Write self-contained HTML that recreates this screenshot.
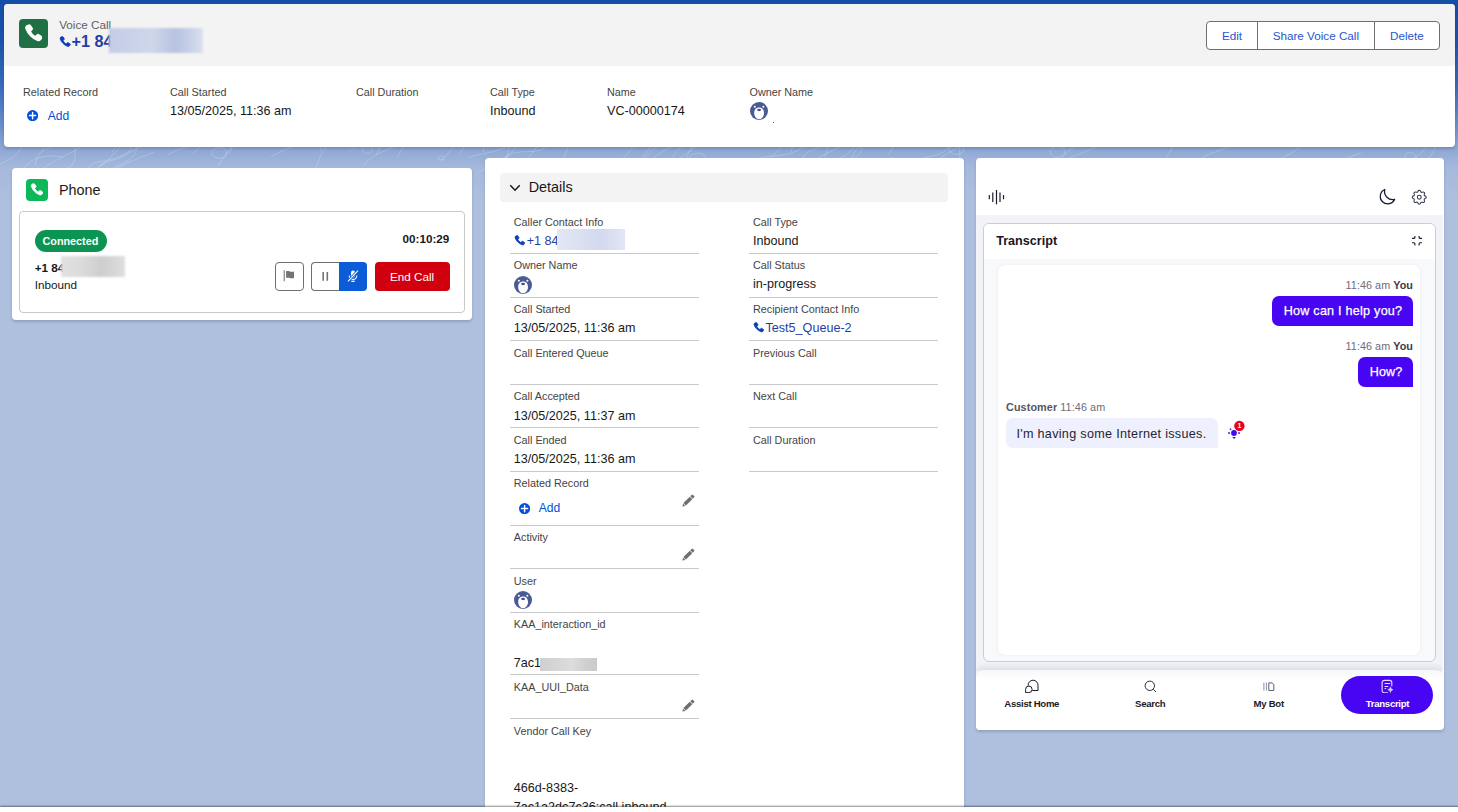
<!DOCTYPE html>
<html lang="en">
<head>
<meta charset="utf-8">
<title>Voice Call</title>
<style>
*{box-sizing:border-box;margin:0;padding:0}
html,body{width:1458px;height:812px;overflow:hidden}
body{position:relative;font-family:"Liberation Sans",Arial,sans-serif;color:#181818;background:#aec0de}
.a{position:absolute;white-space:nowrap}
.bgtop{left:0;top:0;width:1458px;height:210px;background:linear-gradient(180deg,#144ea6 0px,#1953ac 40px,#3367b9 80px,#5580c5 110px,#7093cc 130px,#8ba6d4 147px,#a6b9dc 168px,#aec0de 205px)}
.card{background:#fff;border-radius:4px;box-shadow:0 2px 3px rgba(0,0,0,.16)}
.btn{font-size:11.7px;line-height:27px;border:1px solid #6e6e6e;background:#fff;color:#2a55cf;text-align:center}
b{font-weight:bold}
</style>
</head>
<body>
<div class="a bgtop"></div>
<svg class="a" style="left:0;top:0" width="1458" height="180" viewBox="0 0 1458 180"><defs><linearGradient id="pf" x1="0" y1="0" x2="0" y2="1"><stop offset="0" stop-color="#fff" stop-opacity=".10"/><stop offset=".8" stop-color="#fff" stop-opacity=".22"/><stop offset="1" stop-color="#fff" stop-opacity="0"/></linearGradient></defs><path d="M459 155c16 -28 29 -17 23 -42 M35 165c5 -28 25 -1 27 -52 M909 183c14 -21 44 -28 67 -50 M193 154c10 -12 16 -10 55 -47 M791 152c5 -25 34 -15 37 -40 M651 160c18 -15 19 -10 49 -29 M1060 160c22 -27 25 -4 28 -43 M38 173c18 -17 41 -19 58 -39 M838 166c19 -9 27 -7 23 -35 M938 185c19 -24 24 -7 21 -44 M229 154c5 -13 15 -21 42 -30 M99 166c14 -11 39 0 35 -45 M511 181c21 -27 16 -22 33 -43 M852 159c4 -21 23 -10 72 -36 M743 172c16 -29 41 -3 68 -32 M561 164c6 -16 12 -28 31 -54 M483 152c4 -27 14 -17 21 -29 M889 155c9 -22 23 -26 67 -25 M670 167c6 -28 22 -21 66 -54 M14 183c14 -27 29 -29 49 -26 M1258 174c9 -22 16 -3 49 -33 M468 158c19 -8 40 -2 65 -34 M316 168c10 -29 11 -20 34 -36 M1396 166c21 -8 43 -17 32 -52 M271 157c15 -10 39 -13 56 -32 M105 173c20 -13 36 -13 30 -32 M472 178c21 -21 24 3 60 -54 M168 155c20 -12 15 -1 74 -37 M499 169c6 -30 44 -7 49 -27 M622 181c19 -25 19 -20 33 -39 M364 165c6 -10 22 -14 52 -28 M603 182c13 -18 28 -29 44 -54 M-14 178c7 -20 35 -11 38 -42 M802 177c6 -18 19 -20 62 -42 M811 177c20 -20 31 -12 48 -36 M649 169c13 -9 34 1 72 -51 M808 183c19 -27 14 -15 24 -52 M88 173c18 -10 15 -5 56 -55 M1287 184c8 -9 24 -13 74 -31 M219 165c13 -23 17 -19 60 -59 M800 165c4 -23 32 -12 24 -26 M1147 184c6 -24 11 -3 35 -55 M605 182c19 -24 15 2 51 -35 M112 152c16 -21 13 3 55 -32 M104 180c5 -11 26 -18 50 -28 M376 155c13 -25 14 -24 23 -53 M442 161c18 -24 28 -24 39 -59 M351 151c17 -18 17 -13 71 -56 M1192 165c13 -12 24 -12 58 -26 M487 179c17 -16 24 -18 23 -55 M85 176c9 -26 13 -1 68 -37 M397 158c9 -20 16 -14 34 -26 M1419 169c8 -9 21 -18 20 -47 M682 168c8 -19 10 -21 25 -46 M42 151c9 -25 30 -11 61 -37 M1040 181c11 -23 44 -25 60 -37 M45 179c20 -16 36 -2 28 -42 M726 179c18 -12 30 1 58 -36 M320 151c6 -22 14 -1 51 -38 M907 174c13 -30 38 -4 48 -41 M949 149a7 5 0 1 0 15 0a7 5 0 1 0 -15 0 M363 149a5 3 0 1 0 9 0a5 3 0 1 0 -9 0 M1050 152a7 5 0 1 0 15 0a7 5 0 1 0 -15 0 M1405 157a5 4 0 1 0 11 0a5 4 0 1 0 -11 0 M690 160a8 5 0 1 0 15 0a8 5 0 1 0 -15 0 M888 160a3 2 0 1 0 7 0a3 2 0 1 0 -7 0 M212 153a7 5 0 1 0 15 0a7 5 0 1 0 -15 0 M438 158a3 2 0 1 0 6 0a3 2 0 1 0 -6 0" fill="none" stroke="url(#pf)" stroke-width="1"/></svg>
<div class="a card" style="left:4px;top:4px;width:1450.5px;height:142.5px;overflow:hidden"><div class="a" style="left:0;top:0;width:100%;height:61.8px;background:#f3f3f3"></div></div>
<div class="a " style="left:19px;top:19px;width:29px;height:29px;border-radius:4px;background:#1f7145"></div>
<svg class="a" style="left:24.2px;top:24.3px" width="18.3" height="18.3" viewBox="1.2 1.200 21.8 21.8"><path fill="#fff" stroke="#fff" stroke-width="1.4" stroke-linejoin="round" d="M6.6 2.6c.6-.5 1.500-.4 2 .2l2.300 3.300c.4.600.3 1.400-.2 1.900L9.300 9.400c-.3.300-.4.800-.2 1.200.600 1.100 1.300 2.100 2.100 2.900.9.900 1.900 1.600 3 2.200.4.200.9.100 1.200-.2l1.400-1.400c.5-.5 1.300-.6 1.900-.2l3.300 2.300c.6.400.7 1.300.2 1.900l-1.300 1.600c-.9 1.100-2.400 1.500-3.700 1-3.200-1.200-6-3-8.300-5.400-2.400-2.300-4.200-5.100-5.400-8.300-.5-1.300-.1-2.800 1-3.700z"/></svg>
<div class="a " style="left:59.20px;top:17.15px;font-size:11.7px;line-height:15px;color:#5f5f5f;">Voice Call</div>
<svg class="a" style="left:59.2px;top:35.9px" width="11.6" height="11.6" viewBox="1.2 1.200 21.8 21.8"><path fill="#0d3fb8" stroke="#0d3fb8" stroke-width="1.6" stroke-linejoin="round" d="M6.6 2.6c.6-.5 1.500-.4 2 .2l2.300 3.300c.4.600.3 1.400-.2 1.900L9.300 9.400c-.3.300-.4.800-.2 1.200.600 1.100 1.300 2.100 2.100 2.900.9.900 1.900 1.600 3 2.200.4.200.9.100 1.200-.2l1.400-1.400c.5-.5 1.300-.6 1.900-.2l3.300 2.300c.6.400.7 1.300.2 1.900l-1.300 1.600c-.9 1.100-2.400 1.500-3.700 1-3.200-1.200-6-3-8.300-5.400-2.400-2.300-4.200-5.100-5.400-8.300-.5-1.300-.1-2.800 1-3.700z"/></svg>
<div class="a " style="left:71.60px;top:30.69px;font-size:16.2px;line-height:21px;color:#1f3fa6;font-weight:bold;">+1 84</div>
<div class="a " style="left:109px;top:28px;width:94px;height:25px;background:linear-gradient(90deg,#c3cde5,#c9d2e8 25%,#d0d7ea 45%,#b7c3e1 70%,#c6cfe7 85%,#dde1ee);filter:blur(1.2px)"></div>
<div class="a btn" style="left:1206px;top:21px;width:52px;height:29px;border-radius:4px 0 0 4px">Edit</div>
<div class="a btn" style="left:1257px;top:21px;width:117.7px;height:29px;border-radius:0">Share Voice Call</div>
<div class="a btn" style="left:1373.7px;top:21px;width:66.3px;height:29px;border-radius:0 4px 4px 0">Delete</div>
<div class="a " style="left:23.00px;top:85.46px;font-size:10.8px;line-height:14px;color:#444444;">Related Record</div>
<div class="a " style="left:170.00px;top:85.46px;font-size:10.8px;line-height:14px;color:#444444;">Call Started</div>
<div class="a " style="left:170.00px;top:102.63px;font-size:12.6px;line-height:16px;color:#181818;">13/05/2025, 11:36 am</div>
<div class="a " style="left:356.00px;top:85.46px;font-size:10.8px;line-height:14px;color:#444444;">Call Duration</div>
<div class="a " style="left:490.00px;top:85.46px;font-size:10.8px;line-height:14px;color:#444444;">Call Type</div>
<div class="a " style="left:490.00px;top:102.63px;font-size:12.6px;line-height:16px;color:#181818;">Inbound</div>
<div class="a " style="left:607.00px;top:85.46px;font-size:10.8px;line-height:14px;color:#444444;">Name</div>
<div class="a " style="left:607.00px;top:102.63px;font-size:12.6px;line-height:16px;color:#181818;">VC-00000174</div>
<div class="a " style="left:749.50px;top:85.46px;font-size:10.8px;line-height:14px;color:#444444;">Owner Name</div>
<svg class="a" style="left:27.1px;top:110.2px" width="11.2" height="11.2" viewBox="0 0 20 20"><circle cx="10" cy="10" r="10" fill="#0250d9"/><path d="M10 4.500v11M4.500 10h11" stroke="#fff" stroke-width="2.600" stroke-linecap="round"/></svg>
<div class="a " style="left:47.80px;top:107.51px;font-size:12.1px;line-height:16px;color:#0250d9;">Add</div>
<svg class="a" style="left:750px;top:102px" width="18" height="18" viewBox="0 0 36 36"><circle cx="18" cy="18" r="18" fill="#4a5b94"/><path d="M18.200 10.800c-5.800 0-9.800 4.200-9.800 11 0 6.200 3.800 12.500 9.800 12.500s9.800-6.300 9.800-12.500c0-6.800-4-11-9.800-11z" fill="#fff"/><ellipse cx="18.200" cy="16" rx="3.900" ry="2.300" fill="#3f4f86"/><circle cx="9.600" cy="9.400" r="2" fill="#fff"/><circle cx="26.800" cy="9.400" r="2" fill="#fff"/></svg>
<div class="a " style="left:773px;top:121.8px;width:1.3px;height:1.3px;background:#2b2b3a;border-radius:1px"></div>
<div class="a card" style="left:12px;top:168px;width:460px;height:152px;"></div>
<div class="a " style="left:26px;top:179px;width:22px;height:22px;border-radius:4px;background:#0db85a"></div>
<svg class="a" style="left:30px;top:183px" width="13.2" height="13.2" viewBox="1.2 1.200 21.8 21.8"><path fill="#fff" stroke="#fff" stroke-width="1.5" stroke-linejoin="round" d="M6.6 2.6c.6-.5 1.500-.4 2 .2l2.300 3.300c.4.600.3 1.400-.2 1.900L9.300 9.400c-.3.300-.4.800-.2 1.200.600 1.100 1.300 2.100 2.100 2.900.9.900 1.900 1.600 3 2.200.4.200.9.100 1.200-.2l1.400-1.400c.5-.5 1.300-.6 1.900-.2l3.300 2.300c.6.400.7 1.300.2 1.900l-1.300 1.600c-.9 1.100-2.400 1.500-3.700 1-3.200-1.200-6-3-8.300-5.400-2.400-2.300-4.200-5.100-5.400-8.300-.5-1.300-.1-2.800 1-3.700z"/></svg>
<div class="a " style="left:59.00px;top:180.51px;font-size:14.4px;line-height:19px;color:#181818;">Phone</div>
<div class="a " style="left:19px;top:211px;width:446px;height:102px;border:1px solid #c9c9c9;border-radius:4px"></div>
<div class="a " style="left:34.7px;top:230px;width:72px;height:21.7px;border-radius:11px;background:#0c9552"></div>
<div class="a " style="left:42.50px;top:233.86px;font-size:10.8px;line-height:14px;color:#fff;font-weight:bold;">Connected</div>
<div class="a " style="right:1008.70px;top:231.15px;font-size:11.7px;line-height:15px;color:#181818;font-weight:bold;">00:10:29</div>
<div class="a " style="left:34.70px;top:260.45px;font-size:11.7px;line-height:15px;color:#181818;font-weight:bold;">+1 84</div>
<div class="a " style="left:61px;top:256px;width:64px;height:20.7px;background:linear-gradient(90deg,#e1e1e1,#dadada 35%,#cecece 62%,#d6d6d6 82%,#e0e0e0);filter:blur(.8px)"></div>
<div class="a " style="left:34.70px;top:277.15px;font-size:11.7px;line-height:15px;color:#181818;">Inbound</div>
<div class="a " style="left:275px;top:262px;width:29px;height:29px;border:1px solid #6e6e6e;border-radius:4px;background:#fff"></div>
<div class="a " style="left:311px;top:262px;width:28.5px;height:29px;border:1px solid #6e6e6e;border-right:0;border-radius:4px 0 0 4px;background:#fff"></div>
<div class="a " style="left:339px;top:262px;width:28px;height:29px;border-radius:0 4px 4px 0;background:#0b5cd6"></div>
<div class="a " style="left:375px;top:262px;width:75px;height:29px;border-radius:4px;background:#d1000f"></div>
<div class="a " style="left:390.00px;top:268.95px;font-size:11.7px;line-height:15px;color:#fff;">End Call</div>
<svg class="a" style="left:282px;top:269px" width="14" height="14" viewBox="0 0 14 14"><path d="M2.200 1.200v11.100" stroke="#747474" stroke-width="1.100"/><path d="M4.100 2.300c1.300-.5 2.500-.4 3.700.1 1.300.5 2.600.6 4.200.1v6.600c-1.500.6-2.900.5-4.200 0-1.200-.5-2.400-.6-3.700-.1z" fill="#747474"/></svg>
<svg class="a" style="left:320px;top:270px" width="10" height="12" viewBox="0 0 10 12"><path d="M3.200 2v8.800M7.300 2v8.800" stroke="#747474" stroke-width="1.600"/></svg>
<svg class="a" style="left:346px;top:269px" width="14" height="14" viewBox="0 0 14 14"><rect x="5" y="1.600" width="4" height="7" rx="2" fill="#fff"/><path d="M3.200 6.500c0 2.200 1.700 3.900 3.800 3.900s3.800-1.700 3.800-3.900" fill="none" stroke="#fff" stroke-width="1.100"/><path d="M5.300 12.300h3.400" stroke="#fff" stroke-width="1.300"/><path d="M2 12.300L12 1.700" stroke="#0b5cd6" stroke-width="2.600"/><path d="M2 12.300L12 1.700" stroke="#fff" stroke-width="1.100"/></svg>
<div class="a card" style="left:485px;top:158px;width:478.5px;height:660px;border-radius:4px 4px 0 0"></div>
<div class="a " style="left:500px;top:173px;width:448px;height:28.8px;background:#f3f3f3;border-radius:4px"></div>
<svg class="a" style="left:509px;top:182px" width="12" height="12" viewBox="0 0 12 12"><path d="M1.300 3.200L6 8.200l4.700-5" fill="none" stroke="#181818" stroke-width="1.500"/></svg>
<div class="a " style="left:528.70px;top:177.51px;font-size:14.4px;line-height:19px;color:#181818;">Details</div>
<div class="a " style="left:513.80px;top:215.26px;font-size:10.8px;line-height:14px;color:#444444;">Caller Contact Info</div>
<svg class="a" style="left:514.4px;top:235.2px" width="11" height="11" viewBox="1.2 1.200 21.8 21.8"><path fill="#0d3fb8" stroke="#0d3fb8" stroke-width="1.6" stroke-linejoin="round" d="M6.6 2.6c.6-.5 1.500-.4 2 .2l2.300 3.300c.4.600.3 1.400-.2 1.900L9.300 9.400c-.3.300-.4.800-.2 1.200.600 1.100 1.300 2.100 2.100 2.900.9.900 1.900 1.600 3 2.200.4.200.9.100 1.200-.2l1.400-1.400c.5-.5 1.300-.6 1.900-.2l3.300 2.300c.6.400.7 1.300.2 1.900l-1.300 1.600c-.9 1.100-2.400 1.500-3.700 1-3.200-1.200-6-3-8.300-5.400-2.400-2.300-4.200-5.100-5.400-8.300-.5-1.300-.1-2.800 1-3.700z"/></svg>
<div class="a " style="left:526.70px;top:232.63px;font-size:12.6px;line-height:16px;color:#1f3fa6;">+1 84</div>
<div class="a " style="left:557px;top:229px;width:68px;height:20.7px;background:linear-gradient(90deg,#e3e7f5,#d9dff1 40%,#d3d9ee 65%,#e2e6f4);filter:blur(.6px)"></div>
<div class="a " style="left:510px;top:253px;width:189px;height:1px;background:#c9c9c9"></div>
<div class="a " style="left:513.80px;top:258.06px;font-size:10.8px;line-height:14px;color:#444444;">Owner Name</div>
<svg class="a" style="left:514px;top:276px" width="18" height="18" viewBox="0 0 36 36"><circle cx="18" cy="18" r="18" fill="#4a5b94"/><path d="M18.200 10.800c-5.800 0-9.800 4.200-9.800 11 0 6.200 3.800 12.500 9.800 12.500s9.800-6.300 9.800-12.500c0-6.800-4-11-9.800-11z" fill="#fff"/><ellipse cx="18.200" cy="16" rx="3.900" ry="2.300" fill="#3f4f86"/><circle cx="9.600" cy="9.400" r="2" fill="#fff"/><circle cx="26.800" cy="9.400" r="2" fill="#fff"/></svg>
<div class="a " style="left:510px;top:297px;width:189px;height:1px;background:#c9c9c9"></div>
<div class="a " style="left:513.80px;top:302.26px;font-size:10.8px;line-height:14px;color:#444444;">Call Started</div>
<div class="a " style="left:513.80px;top:319.83px;font-size:12.6px;line-height:16px;color:#181818;">13/05/2025, 11:36 am</div>
<div class="a " style="left:510px;top:340px;width:189px;height:1px;background:#c9c9c9"></div>
<div class="a " style="left:513.80px;top:346.06px;font-size:10.8px;line-height:14px;color:#444444;">Call Entered Queue</div>
<div class="a " style="left:510px;top:384px;width:189px;height:1px;background:#c9c9c9"></div>
<div class="a " style="left:513.80px;top:388.96px;font-size:10.8px;line-height:14px;color:#444444;">Call Accepted</div>
<div class="a " style="left:513.80px;top:407.83px;font-size:12.6px;line-height:16px;color:#181818;">13/05/2025, 11:37 am</div>
<div class="a " style="left:510px;top:427px;width:189px;height:1px;background:#c9c9c9"></div>
<div class="a " style="left:513.80px;top:433.06px;font-size:10.8px;line-height:14px;color:#444444;">Call Ended</div>
<div class="a " style="left:513.80px;top:450.63px;font-size:12.6px;line-height:16px;color:#181818;">13/05/2025, 11:36 am</div>
<div class="a " style="left:510px;top:471px;width:189px;height:1px;background:#c9c9c9"></div>
<div class="a " style="left:513.80px;top:476.06px;font-size:10.8px;line-height:14px;color:#444444;">Related Record</div>
<svg class="a" style="left:518.6999999999999px;top:502.7px" width="11.2" height="11.2" viewBox="0 0 20 20"><circle cx="10" cy="10" r="10" fill="#0250d9"/><path d="M10 4.500v11M4.500 10h11" stroke="#fff" stroke-width="2.600" stroke-linecap="round"/></svg>
<div class="a " style="left:538.70px;top:499.51px;font-size:12.1px;line-height:16px;color:#0250d9;">Add</div>
<svg class="a" style="left:680.5px;top:494.2px" width="14" height="14" viewBox="-7 -7 14 14"><g transform="rotate(-45)" fill="#6e6e6e"><path d="M-7.800 0L-5.300 -1.750V1.750z"/><rect x="-4.700" y="-1.750" width="9" height="3.500"/><path d="M5 -1.750h1.900a.9.900 0 0 1 .9.900v1.700a.9.900 0 0 1-.9.900H5z"/></g></svg>
<div class="a " style="left:510px;top:525px;width:189px;height:1px;background:#c9c9c9"></div>
<div class="a " style="left:513.80px;top:530.26px;font-size:10.8px;line-height:14px;color:#444444;">Activity</div>
<svg class="a" style="left:680.5px;top:548.4000000000001px" width="14" height="14" viewBox="-7 -7 14 14"><g transform="rotate(-45)" fill="#6e6e6e"><path d="M-7.800 0L-5.300 -1.750V1.750z"/><rect x="-4.700" y="-1.750" width="9" height="3.500"/><path d="M5 -1.750h1.900a.9.900 0 0 1 .9.900v1.700a.9.900 0 0 1-.9.900H5z"/></g></svg>
<div class="a " style="left:510px;top:568px;width:189px;height:1px;background:#c9c9c9"></div>
<div class="a " style="left:513.80px;top:573.96px;font-size:10.8px;line-height:14px;color:#444444;">User</div>
<svg class="a" style="left:514px;top:591px" width="18" height="18" viewBox="0 0 36 36"><circle cx="18" cy="18" r="18" fill="#4a5b94"/><path d="M18.200 10.800c-5.800 0-9.800 4.200-9.800 11 0 6.200 3.800 12.500 9.800 12.500s9.800-6.300 9.800-12.500c0-6.800-4-11-9.800-11z" fill="#fff"/><ellipse cx="18.200" cy="16" rx="3.900" ry="2.300" fill="#3f4f86"/><circle cx="9.600" cy="9.400" r="2" fill="#fff"/><circle cx="26.800" cy="9.400" r="2" fill="#fff"/></svg>
<div class="a " style="left:510px;top:612px;width:189px;height:1px;background:#c9c9c9"></div>
<div class="a " style="left:513.80px;top:616.96px;font-size:10.8px;line-height:14px;color:#444444;">KAA_interaction_id</div>
<div class="a " style="left:513.80px;top:654.83px;font-size:12.6px;line-height:16px;color:#181818;">7ac1</div>
<div class="a " style="left:540px;top:658px;width:57px;height:12.8px;background:linear-gradient(90deg,#cfcfcf,#d6d6d6 30%,#dcdcdc 55%,#d0d0d0 80%,#cacaca)"></div>
<div class="a " style="left:510px;top:674px;width:189px;height:1px;background:#c9c9c9"></div>
<div class="a " style="left:513.80px;top:680.06px;font-size:10.8px;line-height:14px;color:#444444;">KAA_UUI_Data</div>
<svg class="a" style="left:680.5px;top:698.7px" width="14" height="14" viewBox="-7 -7 14 14"><g transform="rotate(-45)" fill="#6e6e6e"><path d="M-7.800 0L-5.300 -1.750V1.750z"/><rect x="-4.700" y="-1.750" width="9" height="3.500"/><path d="M5 -1.750h1.900a.9.900 0 0 1 .9.900v1.700a.9.900 0 0 1-.9.900H5z"/></g></svg>
<div class="a " style="left:510px;top:718px;width:189px;height:1px;background:#c9c9c9"></div>
<div class="a " style="left:513.80px;top:723.76px;font-size:10.8px;line-height:14px;color:#444444;">Vendor Call Key</div>
<div class="a " style="left:513.80px;top:779.63px;font-size:12.6px;line-height:16px;color:#181818;">466d-8383-</div>
<div class="a " style="left:513.80px;top:798.53px;font-size:12.6px;line-height:16px;color:#181818;">7ac1a2dc7c36:call.inbound</div>
<div class="a " style="left:753.00px;top:215.26px;font-size:10.8px;line-height:14px;color:#444444;">Call Type</div>
<div class="a " style="left:753.00px;top:232.63px;font-size:12.6px;line-height:16px;color:#181818;">Inbound</div>
<div class="a " style="left:749px;top:253px;width:189px;height:1px;background:#c9c9c9"></div>
<div class="a " style="left:753.00px;top:258.06px;font-size:10.8px;line-height:14px;color:#444444;">Call Status</div>
<div class="a " style="left:753.00px;top:275.93px;font-size:12.6px;line-height:16px;color:#181818;">in-progress</div>
<div class="a " style="left:749px;top:297px;width:189px;height:1px;background:#c9c9c9"></div>
<div class="a " style="left:753.00px;top:302.26px;font-size:10.8px;line-height:14px;color:#444444;">Recipient Contact Info</div>
<svg class="a" style="left:753.4px;top:322.4px" width="11" height="11" viewBox="1.2 1.200 21.8 21.8"><path fill="#0d3fb8" stroke="#0d3fb8" stroke-width="1.6" stroke-linejoin="round" d="M6.6 2.6c.6-.5 1.500-.4 2 .2l2.300 3.300c.4.600.3 1.400-.2 1.900L9.300 9.400c-.3.300-.4.800-.2 1.200.600 1.100 1.300 2.100 2.100 2.900.9.900 1.900 1.600 3 2.200.4.200.9.100 1.200-.2l1.400-1.400c.5-.5 1.300-.6 1.900-.2l3.300 2.300c.6.400.7 1.300.2 1.900l-1.300 1.600c-.9 1.100-2.400 1.500-3.700 1-3.200-1.200-6-3-8.300-5.400-2.400-2.300-4.200-5.100-5.400-8.300-.5-1.300-.1-2.800 1-3.700z"/></svg>
<div class="a " style="left:765.50px;top:319.83px;font-size:12.6px;line-height:16px;color:#1f3fa6;">Test5_Queue-2</div>
<div class="a " style="left:749px;top:340px;width:189px;height:1px;background:#c9c9c9"></div>
<div class="a " style="left:753.00px;top:346.06px;font-size:10.8px;line-height:14px;color:#444444;">Previous Call</div>
<div class="a " style="left:749px;top:384px;width:189px;height:1px;background:#c9c9c9"></div>
<div class="a " style="left:753.00px;top:388.96px;font-size:10.8px;line-height:14px;color:#444444;">Next Call</div>
<div class="a " style="left:749px;top:427px;width:189px;height:1px;background:#c9c9c9"></div>
<div class="a " style="left:753.00px;top:433.06px;font-size:10.8px;line-height:14px;color:#444444;">Call Duration</div>
<div class="a " style="left:749px;top:471px;width:189px;height:1px;background:#c9c9c9"></div>
<div class="a card" style="left:976px;top:157.5px;width:468.3px;height:572.5px;overflow:hidden"></div>
<div class="a " style="left:976px;top:215px;width:466.5px;height:455.5px;background:#f1f3f7"></div>
<div class="a " style="left:976px;top:670.3px;width:466.5px;height:59.7px;background:linear-gradient(180deg,#f6f7f9,#fff 9px);border-radius:8px 8px 4px 4px;box-shadow:0 -2px 7px rgba(20,30,60,.13);clip-path:inset(-14px 0 0 0)"></div>
<svg class="a" style="left:986px;top:188px" width="22" height="18" viewBox="0 0 22 18"><path d="M3.300 7v4.200M6.800 4.500v9.500M10.500 2v14.200M14 4.500v9.500M17.500 7v4.200" stroke="#1b1b2b" stroke-width="1.200" fill="none"/></svg>
<svg class="a" style="left:1378px;top:188px" width="18" height="18" viewBox="0 0 18 18"><path d="M6.800 1.500A7.500 7.500 0 1 0 16.700 11.300A8.100 8.100 0 0 1 6.800 1.500z" fill="none" stroke="#0f1a3a" stroke-width="1.250" stroke-linejoin="round"/></svg>
<svg class="a" style="left:1410.350px;top:187.750px" width="18.500" height="18.500" viewBox="0 0 24 24"><path d="M10.325 4.317c.426-1.756 2.924-1.756 3.350 0a1.724 1.724 0 0 0 2.573 1.066c1.543-.94 3.310.826 2.370 2.370a1.724 1.724 0 0 0 1.065 2.572c1.756.426 1.756 2.924 0 3.350a1.724 1.724 0 0 0-1.066 2.573c.94 1.543-.826 3.310-2.370 2.370a1.724 1.724 0 0 0-2.572 1.065c-.426 1.756-2.924 1.756-3.350 0a1.724 1.724 0 0 0-2.573-1.066c-1.543.94-3.310-.826-2.370-2.370a1.724 1.724 0 0 0-1.065-2.572c-1.756-.426-1.756-2.924 0-3.350a1.724 1.724 0 0 0 1.066-2.573c-.94-1.543.826-3.310 2.370-2.370.996.608 2.296.070 2.572-1.065z" fill="none" stroke="#2f3448" stroke-width="1.350"/><circle cx="12" cy="12" r="2.500" fill="none" stroke="#2f3448" stroke-width="1.350"/></svg>
<div class="a " style="left:983.3px;top:222.5px;width:452.5px;height:439.3px;background:#f8f9fb;border:1px solid #c3cee0;border-radius:6px;overflow:hidden"><div class="a" style="left:0;top:0;width:100%;height:35.800px;background:#fff"></div></div>
<div class="a " style="left:998.3px;top:265.3px;width:421.5px;height:389.5px;background:#fff;border-radius:7px;box-shadow:0 0 3px rgba(225,228,238,.6)"></div>
<div class="a " style="left:996.20px;top:232.63px;font-size:12.6px;line-height:16px;color:#1a1426;font-weight:bold;">Transcript</div>
<svg class="a" style="left:1412px;top:236px" width="10" height="9.5" viewBox="0 0 10 9.5"><path d="M2.900 .4V1.400Q2.900 2.400 1.900 2.400H.3M7.100 .4V1.400Q7.100 2.400 8.100 2.400H9.700M.3 6.700H1.900Q2.900 6.700 2.900 7.700V8.900M9.700 6.700H8.100Q7.100 6.700 7.100 7.700V8.900" fill="none" stroke="#1b1b2b" stroke-width="1.150" stroke-linecap="round"/></svg>
<div class="a" style="right:45px;top:278.06px;font-size:10.8px;line-height:14px;color:#6c6c7a;letter-spacing:.05px">11:46 am <b style="color:#3c3c48">You</b></div>
<div class="a " style="left:1272px;top:295.8px;width:141px;height:30px;background:#4705f3;border-radius:7px 7px 0 7px"></div>
<div class="a " style="left:1283.70px;top:302.63px;font-size:12.6px;line-height:16px;color:#fff;letter-spacing:.24px;-webkit-text-stroke:.25px #fff">How can I help you?</div>
<div class="a" style="right:45px;top:338.96px;font-size:10.8px;line-height:14px;color:#6c6c7a;letter-spacing:.05px">11:46 am <b style="color:#3c3c48">You</b></div>
<div class="a " style="left:1358px;top:357px;width:55px;height:30px;background:#4705f3;border-radius:7px 7px 0 7px"></div>
<div class="a " style="left:1369.70px;top:364.03px;font-size:12.6px;line-height:16px;color:#fff;letter-spacing:.15px;-webkit-text-stroke:.25px #fff">How?</div>
<div class="a" style="left:1006px;top:400.36px;font-size:10.8px;line-height:14px;color:#6c6c7a;letter-spacing:.1px"><b style="color:#565662">Customer</b> 11:46 am</div>
<div class="a " style="left:1006px;top:418.2px;width:211.8px;height:29.6px;background:#eef0fd;border-radius:7px 7px 0 7px"></div>
<div class="a " style="left:1016.40px;top:425.83px;font-size:12.6px;line-height:16px;color:#1f2433;letter-spacing:.31px">I'm having some Internet issues.</div>
<svg class="a" style="left:1226px;top:419px" width="20" height="22" viewBox="0 0 20 22"><g fill="#4705f3"><circle cx="8" cy="14" r="2.900"/><rect x="2" y="13.300" width="2.100" height="1.400" rx=".5"/><rect x="12" y="13.300" width="2" height="1.400" rx=".5"/><rect x="3.600" y="9.600" width="1.800" height="1.400" rx=".5" transform="rotate(40 4.500 10.300)"/><path d="M6.200 18.100h3.700l-1.850 1.900z"/></g><circle cx="13.400" cy="6.900" r="5.200" fill="#e8001c"/><text x="13.400" y="9.300" fill="#fff" text-anchor="middle" style="font:bold 7px &quot;Liberation Sans&quot;,Arial,sans-serif">1</text></svg>
<div class="a " style="left:1341.2px;top:675.8px;width:91.8px;height:38px;background:#4705f3;border-radius:19px"></div>
<div class="a" style="left:991.75px;width:80px;text-align:center;top:697.10px;font-size:9.6px;line-height:13px;font-weight:bold;letter-spacing:-.3px;color:#1a1a24">Assist Home</div>
<div class="a" style="left:1110.15px;width:80px;text-align:center;top:697.10px;font-size:9.6px;line-height:13px;font-weight:bold;letter-spacing:-.3px;color:#1a1a24">Search</div>
<div class="a" style="left:1228.7px;width:80px;text-align:center;top:697.10px;font-size:9.6px;line-height:13px;font-weight:bold;letter-spacing:-.3px;color:#1a1a24">My Bot</div>
<div class="a" style="left:1347.5px;width:80px;text-align:center;top:697.10px;font-size:9.6px;line-height:13px;font-weight:bold;letter-spacing:-.3px;color:#fff">Transcript</div>
<svg class="a" style="left:1025px;top:679px" width="14" height="14" viewBox="0 -.5 14 14"><path d="M3.100 6.300V5.650A4.950 4.950 0 0 1 13 5.650V11H7.300" fill="none" stroke="#1b1b2b" stroke-width="1"/><path d="M.6 13.100V9.850A3.250 3.250 0 1 1 3.850 13.100z" fill="none" stroke="#1b1b2b" stroke-width="1"/></svg>
<svg class="a" style="left:1144px;top:680px" width="13" height="13" viewBox="0 0 13 13"><circle cx="5.800" cy="5.800" r="4.700" fill="none" stroke="#2b2b3b" stroke-width="1"/><path d="M9.300 9.300l2.700 2.700" stroke="#2b2b3b" stroke-width="1"/></svg>
<svg class="a" style="left:1263px;top:682px" width="12" height="10" viewBox="0 0 12 10"><path d="M.9.600v7.800M3.400.600v7.800" stroke="#8d92a3" stroke-width="1"/><path d="M5.800.900h3.300l1.700 1.800v5.800h-5z" fill="none" stroke="#5c6070" stroke-width="1"/></svg>
<svg class="a" style="left:1381px;top:679px" width="13" height="14" viewBox="-.5 -.5 13 14"><path d="M10.300 6.200V3A2.200 2.200 0 0 0 8.100 .800H2.800A2.200 2.200 0 0 0 .6 3V11.100A2.200 2.200 0 0 0 2.800 13.300H6" fill="none" stroke="#e2d9ff" stroke-width="1.150" stroke-linecap="round"/><path d="M3.500 4h4.800M3.500 7h2.800M3.500 9h.8" stroke="#e8e0ff" stroke-width="1.100" stroke-linecap="round"/><path d="M8.900 7.300C9.300 9 9.900 9.700 11.600 10.200 9.900 10.700 9.300 11.400 8.900 13.100 8.500 11.400 7.900 10.700 6.200 10.200 7.900 9.700 8.500 9 8.900 7.300z" fill="#d9ccff" stroke="#d9ccff" stroke-width=".6" stroke-linejoin="round"/></svg>
<div class="a " style="left:0px;top:807px;width:1458px;height:6px;background:#fff;box-shadow:0 -1px 2px rgba(0,0,0,.45)"></div>
</body>
</html>
